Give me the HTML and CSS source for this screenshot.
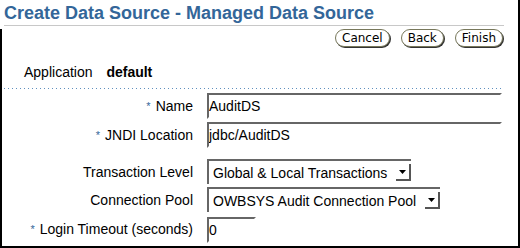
FILE: index.html
```html
<!DOCTYPE html>
<html lang="en">
  <head>
    <meta charset="UTF-8" />
    <title>Create Data Source - Managed Data Source</title>
    <link rel="stylesheet" href="styles.css">
  </head>
  <body>
    <div class="page">
      <h1 class="title">Create Data Source - Managed Data Source</h1>
      <div class="frame">
        <div class="actions">
          <button>Cancel</button>
          <button>Back</button>
          <button>Finish</button>
        </div>

        <div class="app-row">
          <span>Application</span>
          <b>default</b>
        </div>
        <div class="dots"></div>

        <div class="form">
          <div class="row">
            <label><span class="req">*</span>Name</label>
            <input class="field wide" type="text" value="AuditDS" />
          </div>
          <div class="row row-gap">
            <label><span class="req">*</span>JNDI Location</label>
            <input class="field wide" type="text" value="jdbc/AuditDS" />
          </div>
          <div class="row">
            <label>Transaction Level</label>
            <div class="select">
              <span>Global &amp; Local Transactions</span>
              <span class="arrow">
                <svg width="7" height="4" viewBox="0 0 7 4"><path d="M0 0h7L3.5 4z" fill="#000"/></svg>
              </span>
            </div>
          </div>
          <div class="row">
            <label>Connection Pool</label>
            <div class="select">
              <span>OWBSYS Audit Connection Pool</span>
              <span class="arrow">
                <svg width="7" height="4" viewBox="0 0 7 4"><path d="M0 0h7L3.5 4z" fill="#000"/></svg>
              </span>
            </div>
          </div>
          <div class="row">
            <label><span class="req">*</span>Login Timeout (seconds)</label>
            <input class="field short" type="text" value="0" />
          </div>
        </div>
      </div>
    </div>
  </body>
</html>
```

FILE: styles.css
```css
* {
  box-sizing: border-box;
}
body {
  margin: 0;
  width: 520px;
  height: 248px;
  overflow: hidden;
  background: #fff;
  color: #000;
  font-family: "Liberation Sans", Arial, sans-serif;
  font-size: 14px;
}
.page {
  height: 248px;
  border-right: 2px solid #000;
}
.title {
  margin: 0 0 0 4px;
  width: 500px;
  padding: 2px 0 1px;
  font-size: 18px;
  line-height: 22px;
  font-weight: bold;
  color: #336699;
  border-bottom: 1px solid #c8c8c8;
}
.frame {
  margin-top: 3px;
  height: 219px;
  overflow: hidden;
  border-left: 2px solid #000;
  border-bottom: 2px solid #000;
}
.actions {
  display: flex;
  justify-content: flex-end;
  gap: 11px;
  padding-right: 15px;
}
button {
  height: 18px;
  padding: 0 6px;
  font-family: "DejaVu Sans", sans-serif;
  font-size: 12px;
  line-height: 16px;
  color: #000;
  background: #fff;
  border: 1px solid #77775a;
  border-radius: 9px;
  box-shadow: 1px 1px 0 #333;
}
.app-row {
  margin-top: 17px;
  padding-left: 22px;
  line-height: 16px;
}
.app-row b {
  margin-left: 10px;
}
.dots {
  margin: 8px 0 0 2px;
  width: 498px;
  height: 1px;
  background-image: linear-gradient(to right, #5f8fbf 1px, transparent 1px);
  background-size: 4px 1px;
}
.form {
  margin-top: 4px;
}
.row {
  display: flex;
  align-items: center;
  margin-bottom: 3px;
}
.row-gap {
  margin-bottom: 11px;
}
.row label {
  width: 191px;
  margin-right: 14px;
  text-align: right;
  white-space: nowrap;
}
.req {
  color: #336699;
  font-size: 11px;
  margin-right: 5px;
  vertical-align: 1px;
}
.field {
  height: 26px;
  margin: 0;
  padding: 0;
  font-family: "Liberation Sans", Arial, sans-serif;
  font-size: 14px;
  color: #000;
  background: #fff;
  border: 2px solid;
  border-color: #666 #fff #fff #666;
  outline: none;
}
.wide {
  width: 295px;
}
.short {
  width: 49px;
  margin-top: 2px;
}
.select {
  display: flex;
  align-items: center;
  height: 25px;
  padding-left: 4px;
  border-top: 2px solid #666;
  border-left: 2px solid #666;
  white-space: nowrap;
}
.arrow {
  display: flex;
  align-items: center;
  justify-content: center;
  width: 15px;
  height: 17px;
  margin-left: 9px;
  border-right: 2px solid #555;
  border-bottom: 2px solid #555;
}
```
